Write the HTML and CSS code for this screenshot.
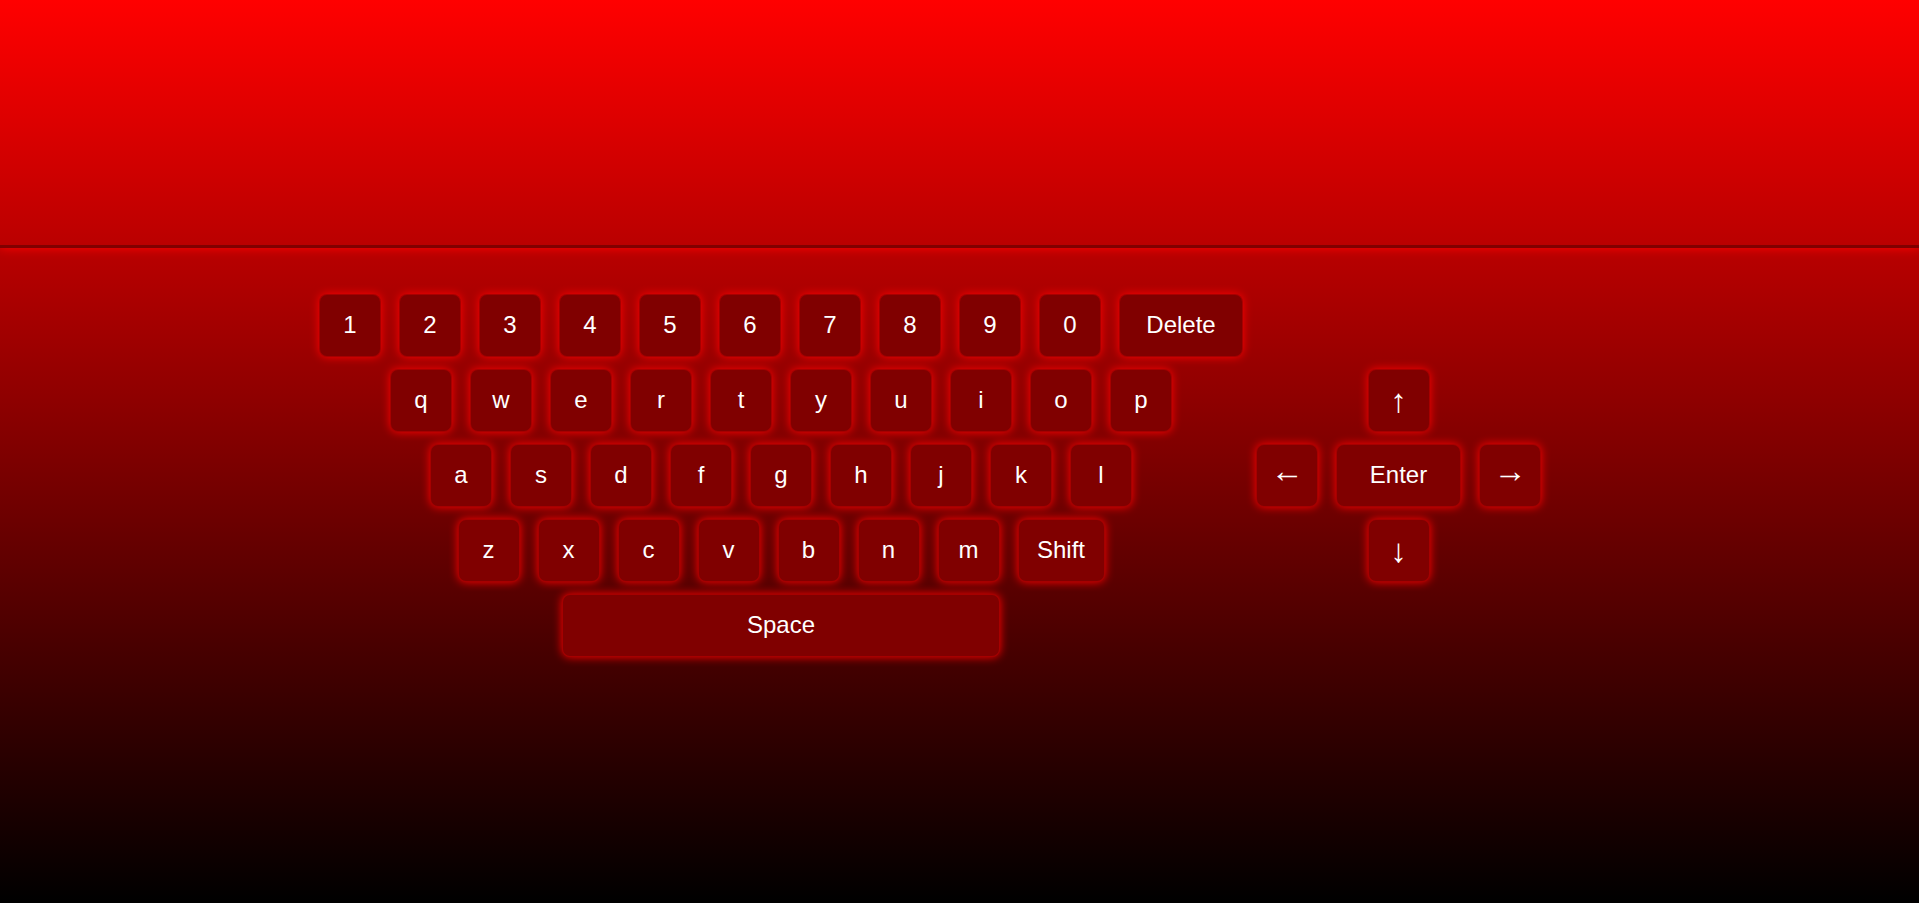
FILE: index.html
```html
<!DOCTYPE html>
<html lang="en">
<head>
<meta charset="utf-8">
<title>Keyboard</title>
<link rel="stylesheet" href="styles.css">
</head>
<body>
<div class="display"></div>
<div class="keyboard">
  <div class="main">
    <div class="row">
      <div class="key">1</div><div class="key">2</div><div class="key">3</div><div class="key">4</div><div class="key">5</div>
      <div class="key">6</div><div class="key">7</div><div class="key">8</div><div class="key">9</div><div class="key">0</div>
      <div class="key wide">Delete</div>
    </div>
    <div class="row">
      <div class="key">q</div><div class="key">w</div><div class="key">e</div><div class="key">r</div><div class="key">t</div>
      <div class="key">y</div><div class="key">u</div><div class="key">i</div><div class="key">o</div><div class="key">p</div>
    </div>
    <div class="row">
      <div class="key">a</div><div class="key">s</div><div class="key">d</div><div class="key">f</div><div class="key">g</div>
      <div class="key">h</div><div class="key">j</div><div class="key">k</div><div class="key">l</div>
    </div>
    <div class="row">
      <div class="key">z</div><div class="key">x</div><div class="key">c</div><div class="key">v</div><div class="key">b</div>
      <div class="key">n</div><div class="key">m</div><div class="key shift">Shift</div>
    </div>
    <div class="row">
      <div class="key space">Space</div>
    </div>
  </div>
  <div class="arrows">
    <div class="key arrow up">↑</div>
    <div class="key arrow left">←</div>
    <div class="key enter">Enter</div>
    <div class="key arrow right">→</div>
    <div class="key arrow down">↓</div>
  </div>
</div>
</body>
</html>
```
FILE: styles.css
```css
html, body {
  margin: 0;
  padding: 0;
  height: 100%;
}
body {
  background: linear-gradient(to bottom, #ff0000 0%, #000000 100%);
  font-family: "Liberation Sans", Arial, sans-serif;
  color: #ffffff;
  overflow: hidden;
}
.display {
  height: 245px;
  border-bottom: 3px solid #800000;
  box-shadow: 0 0 10px #ff0000;
}
.keyboard {
  display: flex;
  align-items: center;
  justify-content: center;
  gap: 13px;
  padding-top: 46px;
  padding-right: 59px;
}
.main {
  width: 924px;
  display: flex;
  flex-direction: column;
  gap: 12.5px;
}
.row {
  display: flex;
  justify-content: center;
  gap: 18px;
}
.key {
  box-sizing: border-box;
  width: 62px;
  height: 62.5px;
  background: #800000;
  border: 1px solid rgba(255, 0, 0, 0.3);
  border-radius: 8px;
  box-shadow: 0 0 10px #ff0000;
  display: flex;
  align-items: center;
  justify-content: center;
  font-size: 24px;
  line-height: 1;
}
.wide { width: 124px; }
.shift { width: 87px; }
.space { width: 438px; }
.arrows {
  display: grid;
  grid-template-columns: 62px 125px 62px;
  grid-template-rows: repeat(3, 62.5px);
  column-gap: 18px;
  row-gap: 12.5px;
}
.enter { width: 125px; }
.arrow { font-size: 33px; }
.left, .right { padding-bottom: 9px; }
.up { grid-column: 2; grid-row: 1; justify-self: center; }
.left { grid-column: 1; grid-row: 2; }
.enter { grid-column: 2; grid-row: 2; }
.right { grid-column: 3; grid-row: 2; }
.down { grid-column: 2; grid-row: 3; justify-self: center; }
```
